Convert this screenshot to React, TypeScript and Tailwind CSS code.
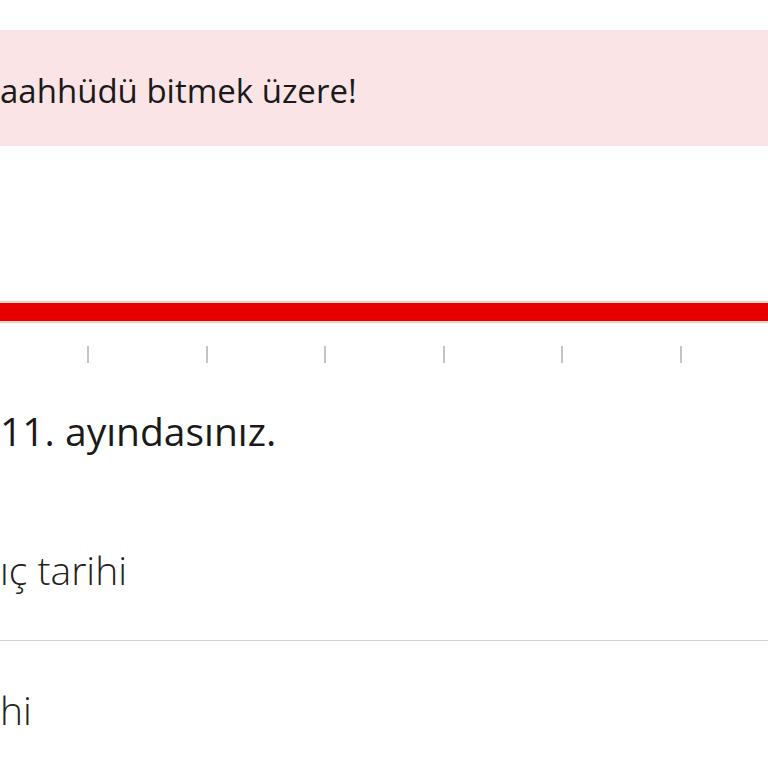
export default function App() {
  const ticks = [0, 1, 2, 3, 4, 5];
  return (
    <div className="w-[768px] h-[768px] overflow-hidden bg-white text-[#1a1a1a]" style={{ fontFamily: '"Open Sans", "Noto Sans", sans-serif' }}>
      {/* Warning banner */}
      <div className="mt-[30px] h-[116px] bg-[#fbe4e6] flex items-center">
        <span className="text-[33px] leading-none pt-[4px]">aahhüdü bitmek üzere!</span>
      </div>

      {/* Progress bar */}
      <div className="mt-[155px] h-[22px] bg-[#ecd3c8] py-[2px]">
        <div className="h-full bg-[#e60000]" />
      </div>

      {/* Ticks */}
      <div className="mt-[23px] h-[17px] flex pl-[87px] gap-[116.5px]">
        {ticks.map((t) => (
          <div key={t} className="w-[2px] h-full bg-[#c4c4c4]" />
        ))}
      </div>

      {/* Month info */}
      <div className="mt-[48px] text-[39px] leading-none">11. ayındasınız.</div>

      {/* Dates */}
      <div className="mt-[100px] font-light text-[39px] leading-none text-[#222] pb-[51px] border-b border-[#d2d2d2]">ıç tarihi</div>
      <div className="mt-[49px] font-light text-[39px] leading-none text-[#222]">hi</div>
    </div>
  );
}
